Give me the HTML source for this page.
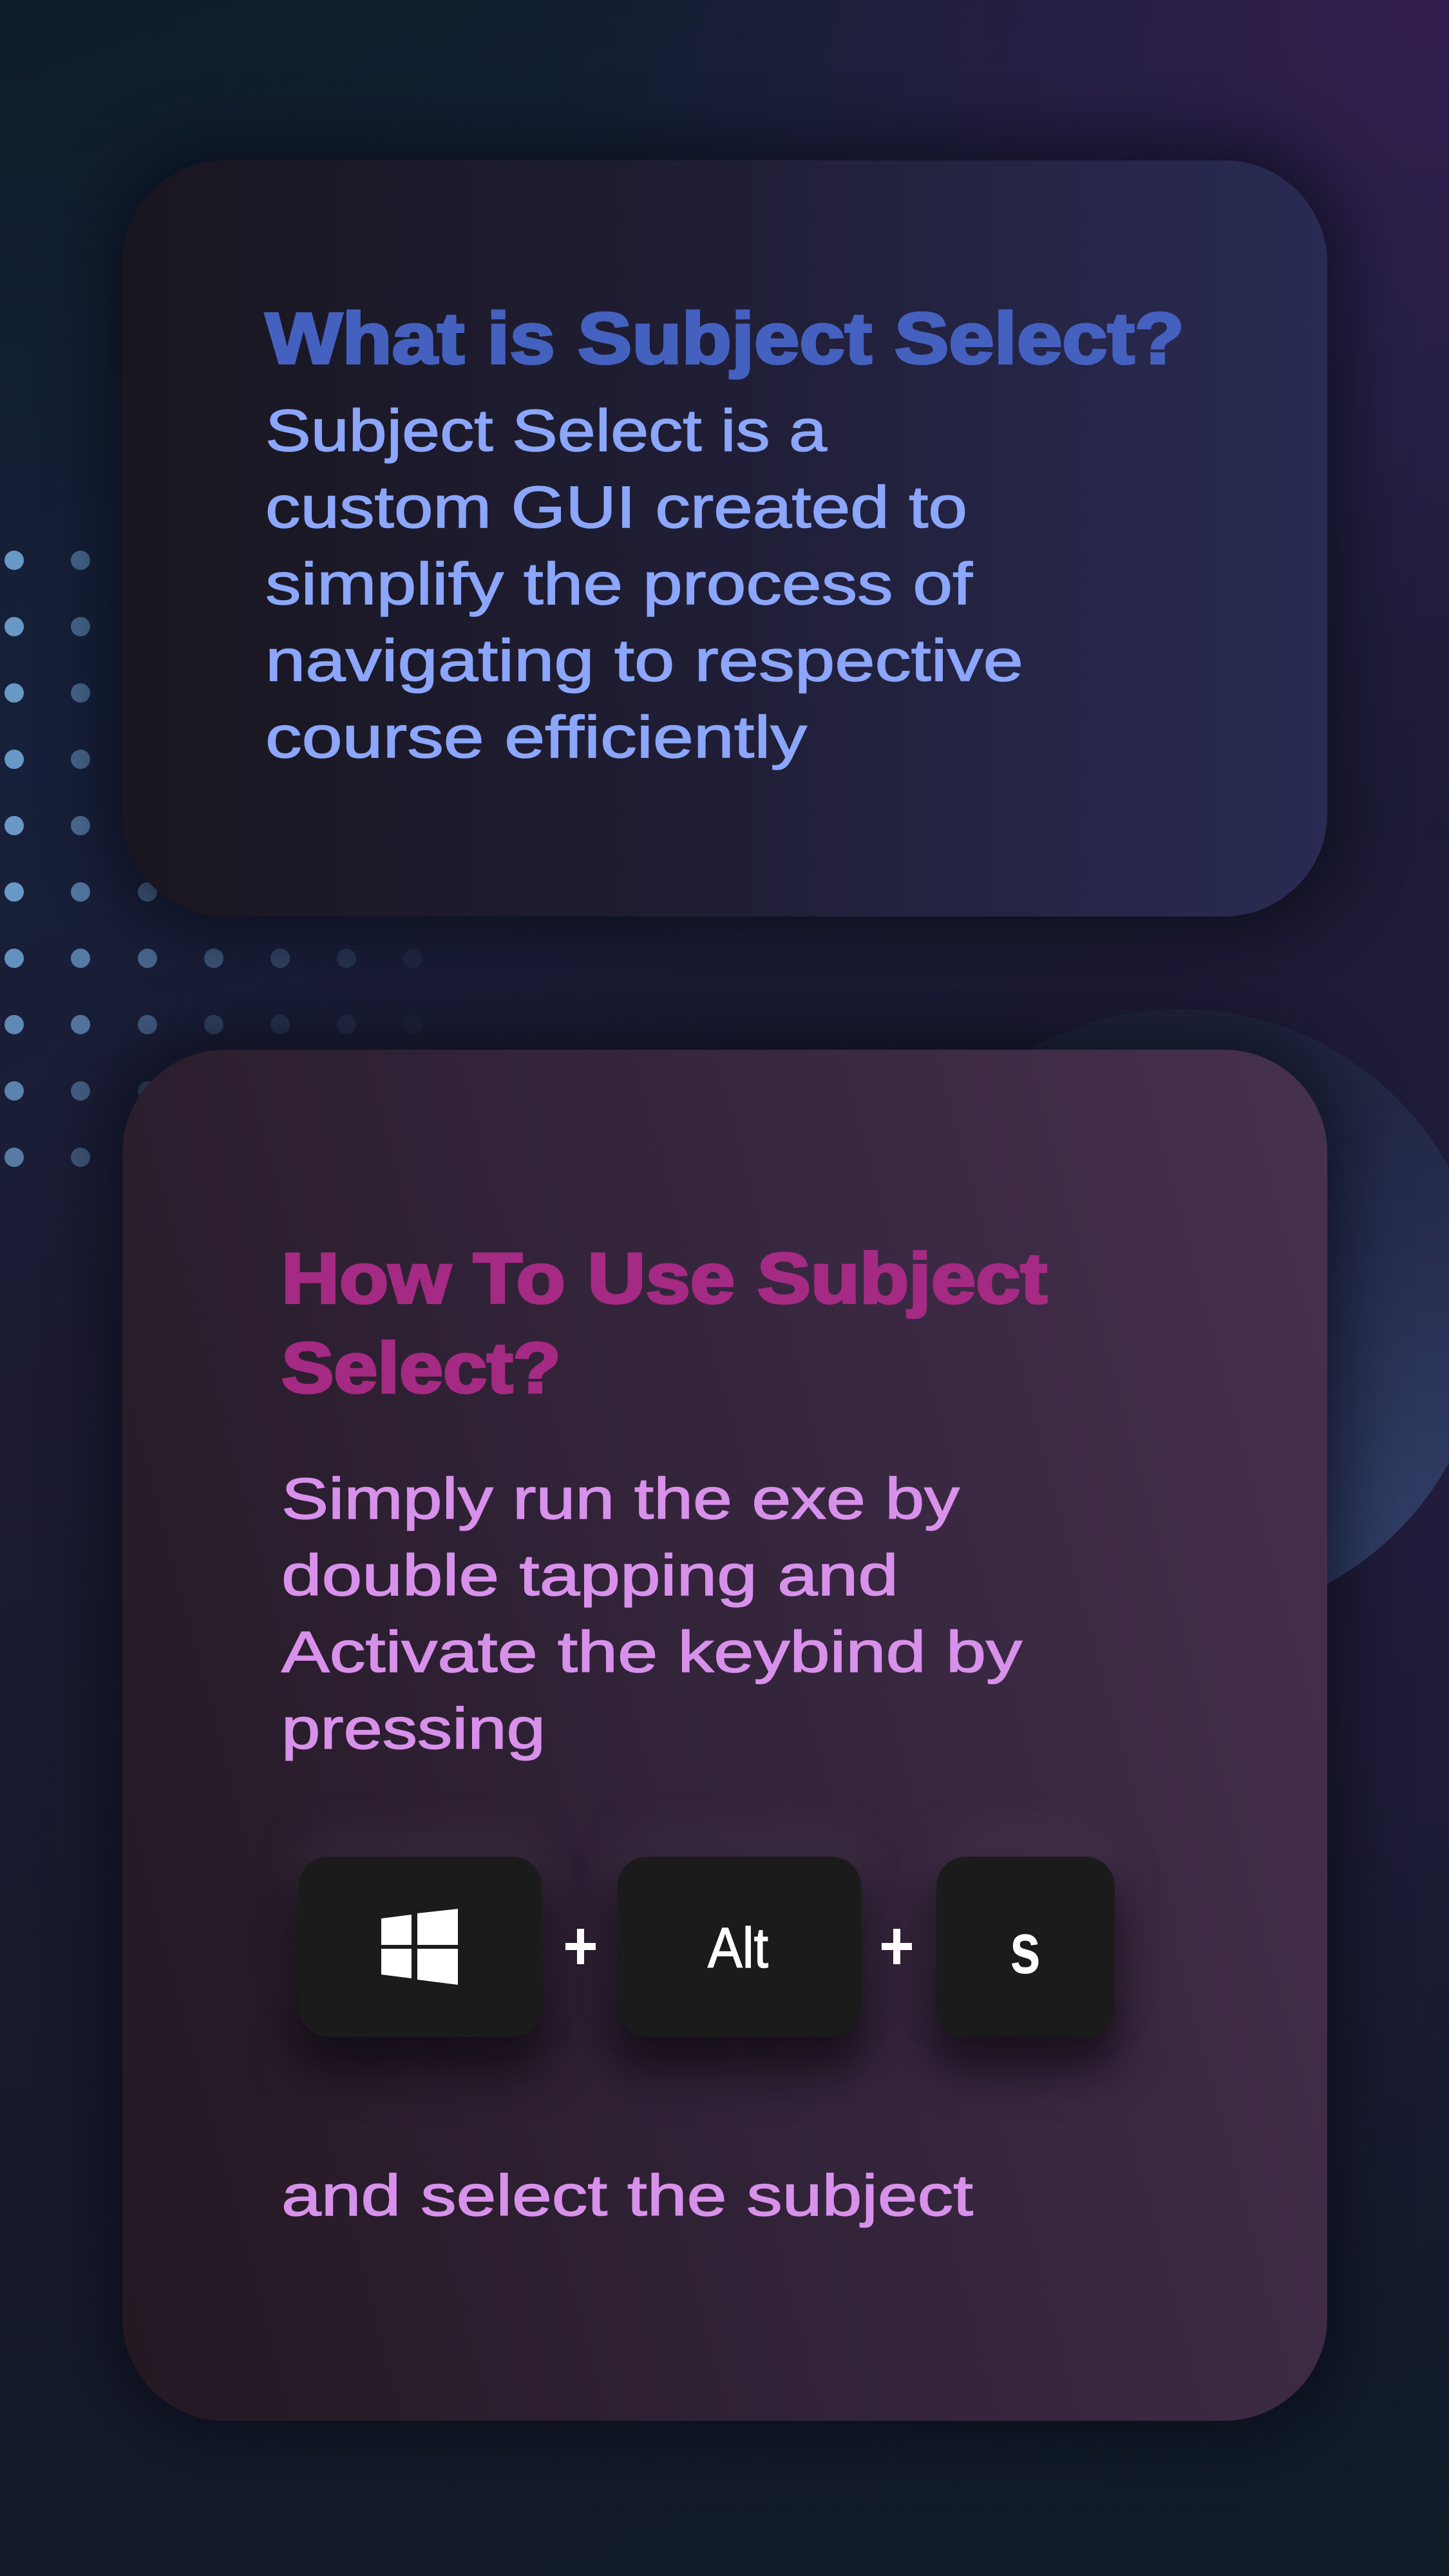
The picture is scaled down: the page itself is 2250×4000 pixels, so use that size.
<!DOCTYPE html>
<html><head><meta charset="utf-8"><style>
html,body{margin:0;padding:0}
body{width:2250px;height:4000px;position:relative;overflow:hidden;
background:linear-gradient(160deg,#0f1e2b 0%,#17203a 25%,#1c1b33 45%,#171a2c 70%,#101b28 100%);}
.bgtr{position:absolute;left:0;top:0;width:2250px;height:4000px;
background:radial-gradient(ellipse 1400px 1300px at 2250px 0px,rgba(52,30,80,.95),rgba(52,30,80,0) 100%);}
.bgr{position:absolute;left:0;top:0;width:2250px;height:4000px;
background:radial-gradient(ellipse 900px 1400px at 2250px 2400px,rgba(40,30,70,.6),rgba(40,30,70,0));}
.circ{position:absolute;left:1359px;top:1567px;width:950px;height:950px;border-radius:50%;
background:linear-gradient(170deg,#1e2238 0%,#262d4f 45%,#33426c 100%);}
.card{position:absolute;left:190px;width:1871px;border-radius:160px;}
.c1{top:249px;height:1174px;background:linear-gradient(90deg,#19161f 0%,#201e36 50%,#292b53 100%);
box-shadow:0 0 90px 30px rgba(6,8,16,.55);}
.c2{top:1630px;height:2129px;background:linear-gradient(75deg,#231822 0%,#33243a 50%,#46304f 100%);
box-shadow:0 0 90px 30px rgba(6,8,16,.55);}
.key{position:absolute;top:2883px;height:280px;background:#1b1b1b;border-radius:46px;
box-shadow:0 40px 70px 10px rgba(10,6,12,.7),0 -30px 70px 0 rgba(90,80,100,.3);}
svg{position:absolute;left:0;top:0}
</style></head><body>
<div class="bgtr"></div><div class="bgr"></div>
<svg width="2250" height="4000">
<g>
<circle cx="22" cy="870" r="15" fill="#78aee0" opacity=".85"/><circle cx="125" cy="870" r="15" fill="#78aee0" opacity=".5"/>
<circle cx="22" cy="973" r="15" fill="#78aee0" opacity=".85"/><circle cx="125" cy="973" r="15" fill="#78aee0" opacity=".5"/>
<circle cx="22" cy="1076" r="15" fill="#78aee0" opacity=".85"/><circle cx="125" cy="1076" r="15" fill="#78aee0" opacity=".5"/>
<circle cx="22" cy="1179" r="15" fill="#78aee0" opacity=".85"/><circle cx="125" cy="1179" r="15" fill="#78aee0" opacity=".5"/>
<circle cx="22" cy="1282" r="15" fill="#78aee0" opacity=".85"/><circle cx="125" cy="1282" r="15" fill="#78aee0" opacity=".55"/>
<circle cx="22" cy="1385" r="15" fill="#78aee0" opacity=".85"/><circle cx="125" cy="1385" r="15" fill="#78aee0" opacity=".62"/><circle cx="229" cy="1385" r="15" fill="#78aee0" opacity=".45"/>
<circle cx="22" cy="1488" r="15" fill="#78aee0" opacity=".8"/><circle cx="125" cy="1488" r="15" fill="#78aee0" opacity=".65"/><circle cx="229" cy="1488" r="15" fill="#78aee0" opacity=".5"/><circle cx="332" cy="1488" r="15" fill="#78aee0" opacity=".38"/><circle cx="435" cy="1488" r="15" fill="#78aee0" opacity=".26"/><circle cx="538" cy="1488" r="15" fill="#78aee0" opacity=".16"/><circle cx="641" cy="1488" r="15" fill="#78aee0" opacity=".08"/>
<circle cx="22" cy="1591" r="15" fill="#78aee0" opacity=".75"/><circle cx="125" cy="1591" r="15" fill="#78aee0" opacity=".6"/><circle cx="229" cy="1591" r="15" fill="#78aee0" opacity=".42"/><circle cx="332" cy="1591" r="15" fill="#78aee0" opacity=".28"/><circle cx="435" cy="1591" r="15" fill="#78aee0" opacity=".16"/><circle cx="538" cy="1591" r="15" fill="#78aee0" opacity=".1"/><circle cx="641" cy="1591" r="15" fill="#78aee0" opacity=".05"/>
<circle cx="22" cy="1694" r="15" fill="#78aee0" opacity=".7"/><circle cx="125" cy="1694" r="15" fill="#78aee0" opacity=".45"/><circle cx="229" cy="1694" r="15" fill="#78aee0" opacity=".3"/>
<circle cx="22" cy="1797" r="15" fill="#78aee0" opacity=".65"/><circle cx="125" cy="1797" r="15" fill="#78aee0" opacity=".4"/>
</g>
</svg>
<div class="circ"></div>
<div class="card c1"></div>
<div class="card c2"></div>
<div class="key" style="left:464px;width:377px"></div>
<div class="key" style="left:959px;width:378px"></div>
<div class="key" style="left:1454px;width:277px"></div>
<svg width="2250" height="4000" font-family="Liberation Sans, sans-serif">
<g font-weight="bold" font-size="112" fill="#4561bf" stroke="#4561bf" stroke-width="4">
<text x="412" y="564" textLength="1427" lengthAdjust="spacingAndGlyphs">What is Subject Select?</text>
</g>
<g font-size="92" fill="#8ba6fb" stroke="#8ba6fb" stroke-width="1.5">
<text x="412" y="700" textLength="872" lengthAdjust="spacingAndGlyphs">Subject Select is a</text>
<text x="412" y="819" textLength="1090" lengthAdjust="spacingAndGlyphs">custom GUI created to</text>
<text x="412" y="938" textLength="1098" lengthAdjust="spacingAndGlyphs">simplify the process of</text>
<text x="412" y="1057" textLength="1177" lengthAdjust="spacingAndGlyphs">navigating to respective</text>
<text x="412" y="1176" textLength="841" lengthAdjust="spacingAndGlyphs">course efficiently</text>
</g>
<g font-weight="bold" font-size="110" fill="#a52a83" stroke="#a52a83" stroke-width="4">
<text x="437" y="2023" textLength="1189" lengthAdjust="spacingAndGlyphs">How To Use Subject</text>
<text x="437" y="2162" textLength="434" lengthAdjust="spacingAndGlyphs">Select?</text>
</g>
<g font-size="90" fill="#d891ea" stroke="#d891ea" stroke-width="1.5">
<text x="437" y="2358" textLength="1053" lengthAdjust="spacingAndGlyphs">Simply run the exe by</text>
<text x="437" y="2477" textLength="958" lengthAdjust="spacingAndGlyphs">double tapping and</text>
<text x="437" y="2596" textLength="1150" lengthAdjust="spacingAndGlyphs">Activate the keybind by</text>
<text x="437" y="2715" textLength="410" lengthAdjust="spacingAndGlyphs">pressing</text>
<text x="437" y="3440" textLength="1074" lengthAdjust="spacingAndGlyphs">and select the subject</text>
</g>
<g fill="#fff">
<polygon points="592,2979 639,2973 639,3020 592,3020"/>
<polygon points="648,2971 711,2964 711,3020 648,3020"/>
<polygon points="592,3026 639,3026 639,3072 592,3066"/>
<polygon points="648,3026 711,3026 711,3082 648,3074"/>
<rect x="878" y="3017" width="47" height="11"/><rect x="896" y="2995" width="11" height="55"/>
<rect x="1369" y="3017" width="47" height="11"/><rect x="1387" y="2995" width="11" height="55"/>
<text x="1099" y="3055" font-size="88" textLength="94" lengthAdjust="spacingAndGlyphs" stroke="#fff" stroke-width="1.5">Alt</text>
<text x="1568" y="3064" font-size="112" font-weight="bold" textLength="48" lengthAdjust="spacingAndGlyphs">s</text>
</g>
</svg>
</body></html>
